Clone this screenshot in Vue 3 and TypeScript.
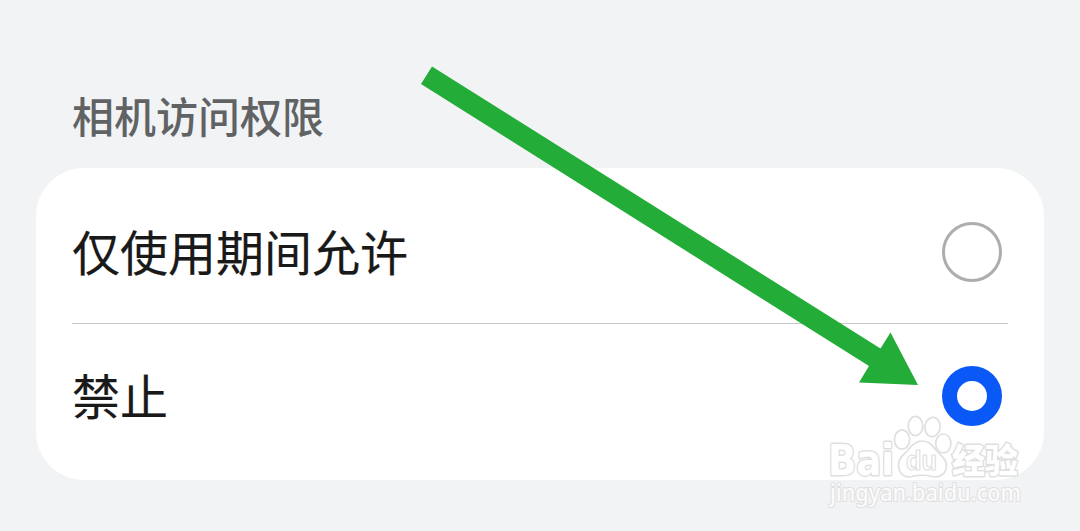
<script setup lang="ts">
import { ref } from 'vue'

interface Option {
  id: string
  label: string
}

const options: Option[] = [
  { id: 'while-using', label: '仅使用期间允许' },
  { id: 'deny', label: '禁止' },
]
const selected = ref('deny')
</script>

<template>
  <main class="page">
    <h1 class="title">相机访问权限</h1>
    <section class="card" role="radiogroup">
      <div
        v-for="option in options"
        :key="option.id"
        class="option"
        role="radio"
        :aria-checked="selected === option.id"
        @click="selected = option.id"
      >
        <span class="label">{{ option.label }}</span>
        <span class="radio" :class="{ checked: selected === option.id }"></span>
      </div>
    </section>

    <svg class="overlay" viewBox="0 0 1080 531" aria-hidden="true">
      <polygon class="arrow" points="432,66.5 880.5,348.5 890.5,332.5 918,385 859,382.5 869,366 421,84" />
      <g class="mark">
        <text class="brand" x="828" y="475" textLength="66" lengthAdjust="spacingAndGlyphs">Bai</text>
        <ellipse cx="902" cy="439.5" rx="7.6" ry="9.7" />
        <ellipse cx="915.5" cy="426" rx="7.3" ry="9.7" />
        <ellipse cx="932.5" cy="427" rx="7.6" ry="9.7" transform="rotate(8 932.5 427)" />
        <ellipse cx="943.3" cy="443.5" rx="7.6" ry="9.5" />
        <path d="M922 441 C915 441 911 446 908 450 C903 455 898 459 898.5 466 C899 474 905 478 912 476.5 Q922 474 932 476.5 C940 478 946 474 946.5 466 C947 459 940 455 936 450 C932 445 929 441 922 441Z" />
        <text class="du" x="906" y="469.5" textLength="31" lengthAdjust="spacingAndGlyphs">du</text>
        <text class="cjk" x="952" y="473" textLength="66" lengthAdjust="spacingAndGlyphs">经验</text>
        <text class="url" x="830" y="501" textLength="191" lengthAdjust="spacingAndGlyphs">jingyan.baidu.com</text>
      </g>
    </svg>
  </main>
</template>

<style>
body {
  background: #f1f3f5;
}
</style>

<style scoped>
.page {
  position: relative;
  box-sizing: border-box;
  height: 531px;
  padding: 85px 36px 0;
  overflow: hidden;
  background: #f1f3f5;
  font-family: "Noto Sans CJK SC", sans-serif;
}

.title {
  margin: 0;
  padding-left: 36px;
  height: 83px;
  color: #606264;
  font-size: 42px;
  font-weight: 500;
  line-height: 60px;
}

.card {
  box-sizing: border-box;
  height: 312px;
  padding: 12px 36px;
  border-radius: 48px;
  background: #fff;
}

.option {
  display: flex;
  box-sizing: border-box;
  height: 144px;
  padding-right: 6px;
  align-items: center;
  justify-content: space-between;
}

.option + .option {
  box-shadow: 0 -1px #c8c8c8;
}

.label {
  padding-bottom: 4px;
  color: #191919;
  font-size: 48px;
  line-height: 72px;
  -webkit-text-stroke: 0.2px #191919;
}

.radio {
  box-sizing: border-box;
  width: 60px;
  height: 60px;
  border: 3px solid #adadad;
  border-radius: 50%;
}

.radio.checked {
  border: 15px solid #0a59f7;
}

.overlay {
  position: absolute;
  inset: 0;
  width: 1080px;
  height: 531px;
  pointer-events: none;
}

.arrow {
  fill: #23ac38;
}

.mark {
  fill: #fff;
  stroke: #dfdfdf;
  stroke-width: 1.7;
  stroke-linejoin: round;
}

.mark text {
  paint-order: stroke;
  stroke-width: 3;
}

.mark .brand {
  font: 700 42px "DejaVu Sans", sans-serif;
}

.mark .du {
  fill: #fff;
  paint-order: normal;
  stroke-width: 1.2;
  font: 700 27px "Liberation Sans", sans-serif;
}

.mark .cjk {
  font: 900 34px "Noto Sans CJK SC", sans-serif;
}

.mark .url {
  fill: #fbfbfb;
  stroke: #e0e0e1;
  stroke-width: 2.2;
  font: 500 23px "Noto Sans", sans-serif;
}
</style>
